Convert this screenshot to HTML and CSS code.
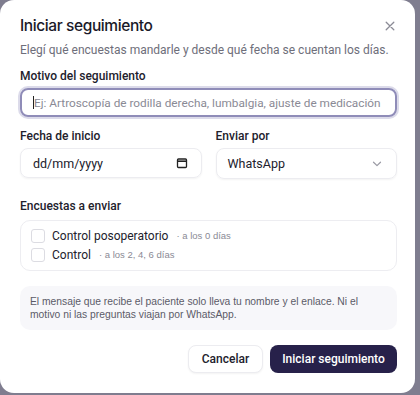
FILE: index.html
```html
<!DOCTYPE html>
<html lang="es">
<head>
<meta charset="utf-8">
<link rel="stylesheet" href="styles.css">
</head>
<body>
<div class="dialog">
  <div class="head">
    <h1 class="title">Iniciar seguimiento</h1>
    <button class="close" aria-label="Cerrar">
      <svg width="10" height="10" viewBox="0 0 10 10"><path d="M1.2 1.2L8.8 8.8M8.8 1.2L1.2 8.8" stroke="#8b8b96" stroke-width="1.3" stroke-linecap="round"/></svg>
    </button>
  </div>
  <p class="subtitle">Elegí qué encuestas mandarle y desde qué fecha se cuentan los días.</p>

  <label class="label first">Motivo del seguimiento</label>
  <div class="input focus"><span class="caret"></span><span class="ph">Ej: Artroscopía de rodilla derecha, lumbalgia, ajuste de medicación</span></div>

  <div class="row">
    <div class="col">
      <label class="label">Fecha de inicio</label>
      <div class="input date"><span class="val">dd/mm/yyyy</span>
        <svg width="12" height="12" viewBox="0 0 12 12"><rect x="1.5" y="2" width="9" height="8.5" rx="1" fill="none" stroke="#222" stroke-width="1.3"/><path d="M1.5 4.2H10.5" stroke="#222" stroke-width="1.6"/></svg>
      </div>
    </div>
    <div class="col">
      <label class="label">Enviar por</label>
      <div class="input select"><span class="val">WhatsApp</span>
        <svg width="10" height="6" viewBox="0 0 10 6"><path d="M1.5 1.2L5 4.6L8.5 1.2" fill="none" stroke="#9a9aa4" stroke-width="1.2" stroke-linecap="round" stroke-linejoin="round"/></svg>
      </div>
    </div>
  </div>

  <label class="label third">Encuestas a enviar</label>
  <div class="surveys">
    <div class="survey"><span class="box"></span><span class="name">Control posoperatorio</span><span class="meta">· a los 0 días</span></div>
    <div class="survey"><span class="box"></span><span class="name">Control</span><span class="meta">· a los 2, 4, 6 días</span></div>
  </div>

  <div class="note">El mensaje que recibe el paciente solo lleva tu nombre y el enlace. Ni el motivo ni las preguntas viajan por WhatsApp.</div>

  <div class="actions">
    <button class="btn ghost">Cancelar</button>
    <button class="btn primary">Iniciar seguimiento</button>
  </div>
</div>
</body>
</html>
```
FILE: styles.css
```css
html, body { margin: 0; padding: 0; }
body {
  width: 420px; height: 395px; overflow: hidden;
  background: #7f7d8f;
  font-family: Roboto, "Liberation Sans", sans-serif;
  color: #1c1b26;
}
.dialog {
  box-sizing: border-box;
  width: 415px; height: 393px;
  background: #fff;
  border-radius: 14px;
  padding: 14px 18px 0 20px;
}
.head { display: flex; justify-content: space-between; align-items: center; height: 24px; }
.title { margin: 0; font-family: Inter, sans-serif; font-size: 15.5px; font-weight: 500; letter-spacing: -0.4px; line-height: 24px; color: #1a1928; }
.close { border: 0; background: none; padding: 0; margin-right: 2px; display: flex; }
.subtitle { margin: 2px 0 0; font-size: 12px; color: #6e6e7a; line-height: 20px; letter-spacing: 0; white-space: nowrap; }
.label { display: block; margin-top: 10px; font-size: 12px; font-weight: 500; line-height: 18px; color: #22212c; }
.label.first { margin-top: 7px; }
.label.third { margin-top: 18px; }
.input {
  box-sizing: border-box; margin-top: 3px; height: 30px;
  border: 1px solid #ececf0; border-radius: 8px;
  display: flex; align-items: center; padding: 0 12px;
  font-size: 12.5px; box-shadow: 0 1px 2px rgba(0,0,0,0.05);
}
.input.focus { border: 2px solid #8f8cb8; box-shadow: 0 0 0 2px #dcdbea; padding-left: 11px; height: 29px; }
.caret { width: 1px; height: 13px; background: #222; margin-right: 0; }
.ph { color: #8a8a95; white-space: nowrap; overflow: hidden; font-size: 11.8px; letter-spacing: 0; }
.row { display: flex; gap: 14px; }
.col { flex: 1; }
.date { justify-content: space-between; padding: 0 13px 0 12px; }
.select { justify-content: space-between; padding: 0 14px 0 11px; height: 31px; }
.val { color: #22212c; }
.surveys {
  box-sizing: border-box; height: 51px;
  margin-top: 5px; border: 1px solid #ededf1; border-radius: 10px;
  padding: 5px 10px; display: flex; flex-direction: column;
}
.survey { display: flex; align-items: center; height: 19px; }
.box { width: 12px; height: 12px; border: 1px solid #dcdce2; border-radius: 3px; margin-right: 7px; }
.name { font-size: 12px; color: #22212c; }
.meta { font-size: 9.5px; color: #8a8a95; margin-left: 8px; font-family: "Liberation Sans", sans-serif; }
.note {
  box-sizing: border-box; height: 44px;
  margin-top: 15px; background: #f7f7fa; border-radius: 10px;
  padding: 10px 10px 8px 10px; font-size: 10.3px; line-height: 12.5px; color: #5b5b68;
  font-family: "Liberation Sans", sans-serif;
}
.actions { display: flex; justify-content: flex-end; gap: 7px; margin-top: 15px; }
.btn { height: 28px; border-radius: 8px; font-family: Roboto, sans-serif; font-size: 12px; font-weight: 500; padding: 0; white-space: nowrap; }
.ghost { background: #fff; border: 1px solid #ececf0; color: #22212c; box-shadow: 0 1px 2px rgba(0,0,0,0.05); width: 75px; }
.primary { background: #27214a; border: 0; color: #fff; width: 127px; }
```
